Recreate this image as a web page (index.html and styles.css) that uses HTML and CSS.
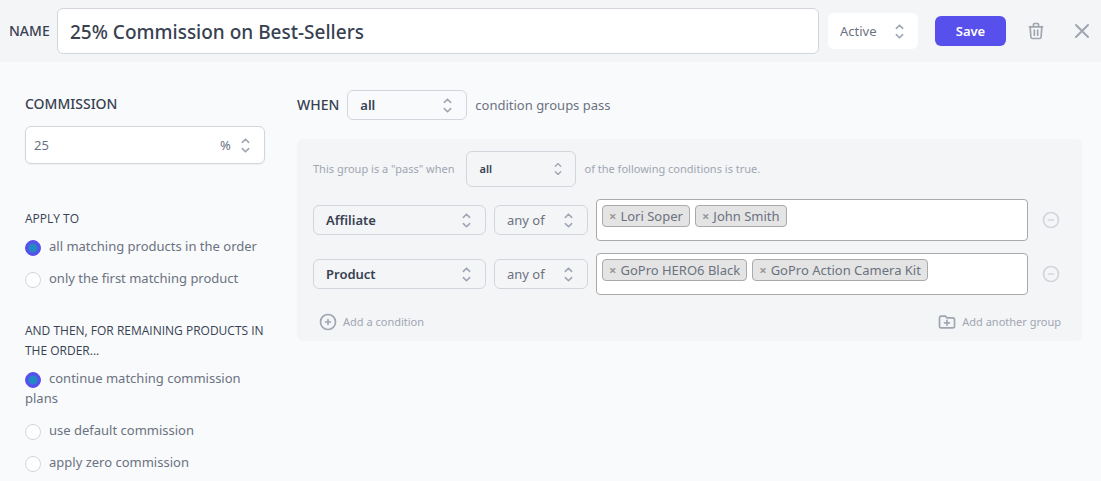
FILE: index.html
```html
<!DOCTYPE html>
<html lang="en">
<head>
<meta charset="utf-8">
<meta name="viewport" content="width=device-width, initial-scale=1">
<title>Commission plan</title>
<link rel="stylesheet" href="styles.css">
</head>
<body>
<form class="plan">
  <header class="topbar">
    <label class="heading" for="plan-name">NAME</label>
    <input class="name-input" id="plan-name" type="text" value="25% Commission on Best-Sellers">
    <select class="select status" aria-label="Status"><option>Active</option><option>Inactive</option></select>
    <button class="save" type="submit">Save</button>
    <button class="icon-button trash" type="button" aria-label="Delete">
      <svg width="20" height="20" viewBox="0 0 24 24" fill="none" stroke="currentColor" stroke-width="2" stroke-linecap="round" stroke-linejoin="round"><path d="M19 7l-.87 12.14A2 2 0 0116.14 21H7.86a2 2 0 01-1.99-1.86L5 7m5 4v6m4-6v6m1-10V4a1 1 0 00-1-1h-4a1 1 0 00-1 1v3M4 7h16"/></svg>
    </button>
    <button class="icon-button close" type="button" aria-label="Close">
      <svg width="24" height="24" viewBox="0 0 24 24" fill="none" stroke="currentColor" stroke-width="2" stroke-linecap="round"><path d="M6 18L18 6M6 6l12 12"/></svg>
    </button>
  </header>

  <main class="content">
    <section class="settings">
      <label class="heading" for="amount">COMMISSION</label>
      <div class="amount">
        <input class="amount-input" id="amount" type="text" value="25">
        <select class="select unit" aria-label="Commission unit"><option>%</option><option>$</option></select>
      </div>

      <fieldset class="choices">
        <legend class="subheading">APPLY TO</legend>
        <label class="choice"><input class="radio" type="radio" name="apply" checked>all matching products in the order</label>
        <label class="choice"><input class="radio" type="radio" name="apply">only the first matching product</label>
      </fieldset>

      <fieldset class="choices">
        <legend class="subheading">AND THEN, FOR REMAINING PRODUCTS IN THE ORDER...</legend>
        <label class="choice"><input class="radio" type="radio" name="rest" checked>continue matching commission plans</label>
        <label class="choice"><input class="radio" type="radio" name="rest">use default commission</label>
        <label class="choice"><input class="radio" type="radio" name="rest">apply zero commission</label>
      </fieldset>
    </section>

    <section class="conditions">
      <div class="when">
        <label class="heading" for="match">WHEN</label>
        <select class="select outlined strong match" id="match"><option>all</option><option>any</option></select>
        <span>condition groups pass</span>
      </div>

      <div class="group">
        <div class="group-head">
          <label class="group-label" for="group-match">This group is a "pass" when</label>
          <select class="select outlined strong small" id="group-match"><option>all</option><option>any</option></select>
          <span>of the following conditions is true.</span>
        </div>

        <div class="condition">
          <select class="select outlined strong field" aria-label="Field"><option>Affiliate</option><option>Product</option></select>
          <select class="select outlined operator" aria-label="Operator"><option>any of</option><option>none of</option></select>
          <div class="tags">
            <span class="tag"><button class="tag-remove" type="button" aria-label="Remove Lori Soper">×</button>Lori Soper</span>
            <span class="tag"><button class="tag-remove" type="button" aria-label="Remove John Smith">×</button>John Smith</span>
          </div>
          <button class="icon-button remove" type="button" aria-label="Remove condition">
            <svg width="20" height="20" viewBox="0 0 24 24" fill="none" stroke="currentColor" stroke-width="2" stroke-linecap="round"><circle cx="12" cy="12" r="9"/><path d="M15 12H9"/></svg>
          </button>
        </div>

        <div class="condition">
          <select class="select outlined strong field" aria-label="Field"><option>Product</option><option>Affiliate</option></select>
          <select class="select outlined operator" aria-label="Operator"><option>any of</option><option>none of</option></select>
          <div class="tags">
            <span class="tag"><button class="tag-remove" type="button" aria-label="Remove GoPro HERO6 Black">×</button>GoPro HERO6 Black</span>
            <span class="tag"><button class="tag-remove" type="button" aria-label="Remove GoPro Action Camera Kit">×</button>GoPro Action Camera Kit</span>
          </div>
          <button class="icon-button remove" type="button" aria-label="Remove condition">
            <svg width="20" height="20" viewBox="0 0 24 24" fill="none" stroke="currentColor" stroke-width="2" stroke-linecap="round"><circle cx="12" cy="12" r="9"/><path d="M15 12H9"/></svg>
          </button>
        </div>

        <div class="group-foot">
          <button class="add" type="button">
            <svg width="20" height="20" viewBox="0 0 24 24" fill="none" stroke="currentColor" stroke-width="2" stroke-linecap="round"><circle cx="12" cy="12" r="9"/><path d="M12 9v6m3-3H9"/></svg>
            Add a condition
          </button>
          <button class="add" type="button">
            <svg width="20" height="20" viewBox="0 0 24 24" fill="none" stroke="currentColor" stroke-width="2" stroke-linecap="round" stroke-linejoin="round"><path d="M9 13h6m-3-3v6m-9 1V7a2 2 0 012-2h5l2 2h7a2 2 0 012 2v8a2 2 0 01-2 2H5a2 2 0 01-2-2z"/></svg>
            Add another group
          </button>
        </div>
      </div>
    </section>
  </main>
</form>
</body>
</html>
```
FILE: styles.css
```css
*, *::before, *::after { box-sizing: border-box; }

body {
  margin: 0;
  background: #f9fafc;
  color: #6b7280;
  font: 13px/20px "Noto Sans", "Open Sans", sans-serif;
}

input, select, button {
  margin: 0;
  font: inherit;
  color: inherit;
}

button {
  padding: 0;
  border: 0;
  background: none;
  cursor: pointer;
}

svg { display: block; flex: none; }

.heading {
  color: #374151;
  font-size: 14px;
  font-weight: 500;
}

.topbar {
  display: flex;
  align-items: center;
  padding: 8px 7px 8px 8px;
  background: #f4f5f7;
}

.topbar .heading { width: 49px; padding-left: 1px; }

.name-input {
  flex: 1;
  min-width: 0;
  height: 46px;
  padding: 2px 12px 0;
  border: 1px solid #d2d6dc;
  border-radius: 6px;
  background: #fff;
  color: #374151;
  font-size: 19px;
  font-weight: 500;
}

.select {
  appearance: none;
  height: 30px;
  padding: 0 30px 0 12px;
  border: 0;
  border-radius: 6px;
  background: transparent url("data:image/svg+xml,%3Csvg xmlns='http://www.w3.org/2000/svg' viewBox='0 0 20 20' fill='none' stroke='%239fa6b2' stroke-width='1.5' stroke-linecap='round' stroke-linejoin='round'%3E%3Cpath d='M7 7l3-3 3 3m0 6l-3 3-3-3'/%3E%3C/svg%3E") no-repeat right 8px center / 21px 21px;
}

.outlined { border: 1px solid #d2d6dc; }
.strong { color: #374151; font-weight: 600; }

.status {
  width: 90px;
  height: 36px;
  margin-left: 9px;
  background-color: #fff;
}

.save {
  width: 71px;
  height: 30px;
  margin-left: 17px;
  border-radius: 6px;
  background: #5850ec;
  color: #fff;
  font-weight: 600;
}

.icon-button { color: #9fa6b2; }
.trash { margin-left: 20px; }
.close { margin-left: 24px; }

.content {
  display: flex;
  align-items: flex-start;
  gap: 32px;
  padding: 28px 19px 0 25px;
}

.settings { width: 240px; flex: none; padding-top: 4px; }
.settings > .heading { display: block; }

.amount {
  display: flex;
  align-items: center;
  height: 38px;
  margin-top: 12px;
  border: 1px solid #d2d6dc;
  border-radius: 6px;
  background: #fff;
  box-shadow: 0 1px 2px rgba(0, 0, 0, 0.05);
}

.amount-input {
  flex: 1;
  min-width: 0;
  padding: 0 8px;
  border: 0;
  background: none;
}

.unit { width: 56px; }

.choices {
  display: flex;
  flex-direction: column;
  gap: 12px;
  min-width: 0;
  margin: 45px 0 0;
  padding: 0;
  border: 0;
}

.choices + .choices { margin-top: 33px; }

.subheading {
  margin-bottom: 7px;
  padding: 0;
  color: #374151;
  font-family: "Open Sans", "Noto Sans", sans-serif;
  font-size: 12px;
  font-weight: 500;
}

.radio {
  appearance: none;
  width: 16px;
  height: 16px;
  margin-right: 8px;
  border: 1px solid #d2d6dc;
  border-radius: 50%;
  background: #fff;
  vertical-align: -5px;
}

.radio:checked {
  border-color: #5850ec;
  background: radial-gradient(circle, #2389c4 4px, #5850ec 5px);
}

.conditions { flex: 1; min-width: 0; }

.when {
  display: flex;
  align-items: center;
  gap: 8px;
}

.match { width: 120px; }

.group {
  margin-top: 19px;
  padding: 12px 16px 9px;
  border-radius: 6px;
  background: #f4f5f7;
}

.group-head {
  display: flex;
  align-items: center;
  gap: 8px;
  color: #9fa6b2;
  font-size: 11px;
}

.group-label { padding-right: 4px; }

.small {
  width: 110px;
  height: 36px;
  background-size: 18px 18px;
}

.condition {
  display: flex;
  align-items: center;
  gap: 8px;
  margin-top: 12px;
}

.field { width: 173px; }
.operator { width: 94px; }

.tags {
  flex: 1;
  min-width: 0;
  min-height: 42px;
  display: flex;
  flex-wrap: wrap;
  align-content: flex-start;
  gap: 5px;
  padding: 5px;
  border: 1px solid #aaa;
  border-radius: 4px;
  background: #fff;
}

.tag {
  display: flex;
  align-items: center;
  gap: 4px;
  height: 22px;
  padding: 0 6px;
  border: 1px solid #aaa;
  border-radius: 4px;
  background: #e4e4e4;
}

.tag-remove {
  color: #999;
  font-weight: 700;
}

.remove {
  margin: 0 5px;
  color: #d2d6dc;
}

.group-foot {
  display: flex;
  justify-content: space-between;
  margin-top: 17px;
  padding: 0 5px;
}

.add {
  display: flex;
  align-items: center;
  gap: 5px;
  color: #9fa6b2;
  font-size: 11px;
}
```
